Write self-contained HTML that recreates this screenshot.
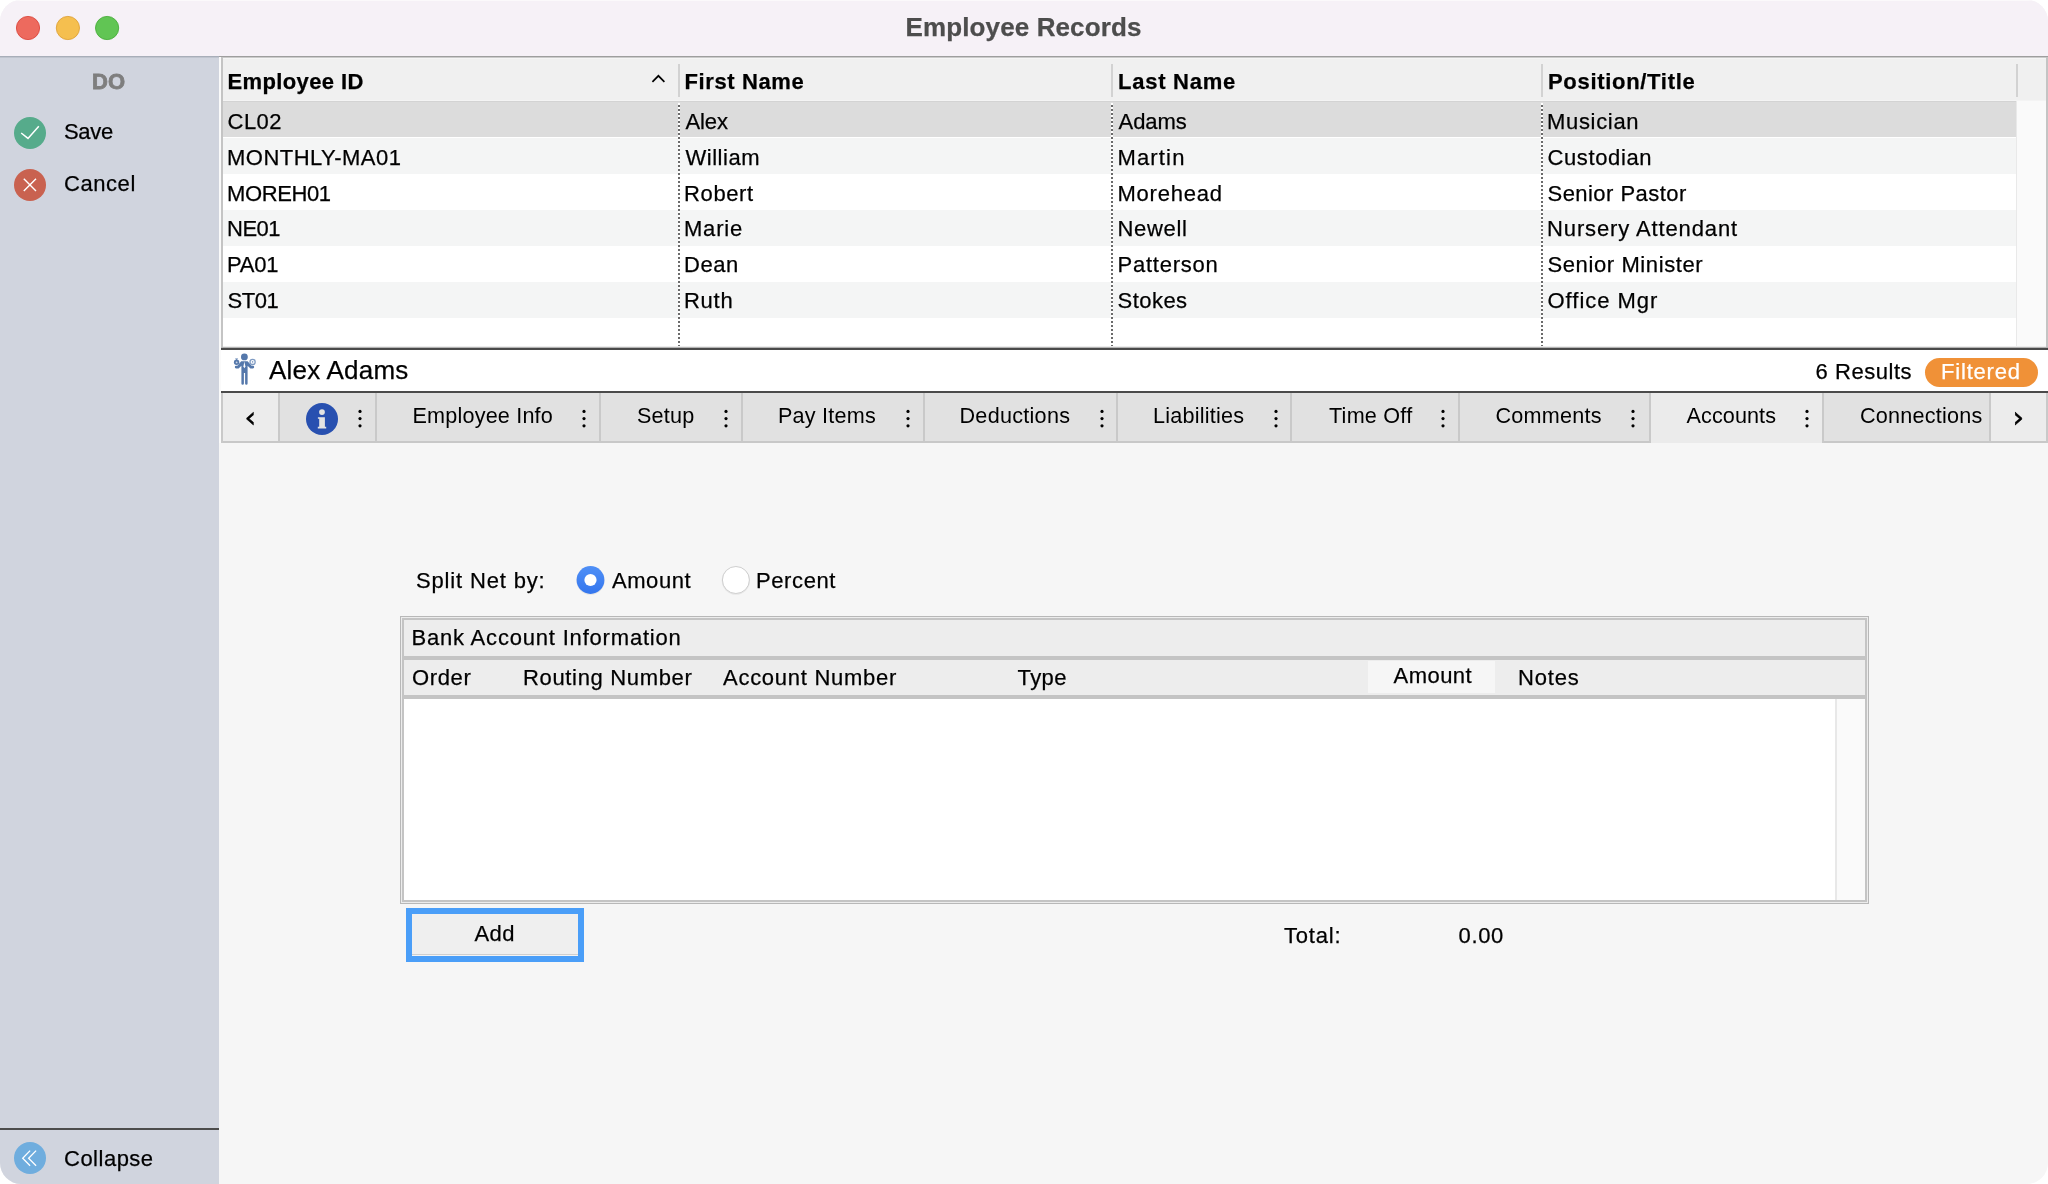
<!DOCTYPE html>
<html lang="en">
<head>
<meta charset="utf-8">
<title>Employee Records</title>
<style>
*{box-sizing:border-box;margin:0;padding:0}
html,body{width:2048px;height:1184px;overflow:hidden;background:#fff}
body{font-family:"Liberation Sans",sans-serif;color:#000;font-size:22px;position:relative}
.win{position:absolute;left:0;top:0;width:2048px;height:1184px;border-radius:21px;overflow:hidden;background:#f6f6f6}
.win div,.win span,.win svg{position:absolute}
.t{white-space:nowrap;line-height:30px;height:30px;-webkit-text-stroke:0.25px currentColor}
.tx{left:0;top:0;width:2048px;height:1184px;will-change:transform}
.b{display:block}
.tl{width:24px;height:24px;border-radius:50%;top:16px}
.alt{left:223px;width:1793px;height:36px;background:#f4f5f5}
.hsep{top:64px;width:2px;height:33px;background:#d2d2d2}
.vdot{top:103px;width:2px;height:245px;background:repeating-linear-gradient(to bottom,#fff 0,#fff 2px,#6a6a6a 2px,#6a6a6a 4px)}
.tsep{top:393px;width:2px;height:48px;background:#c9c9c9}
.dot{width:3.4px;height:3.4px;border-radius:50%;background:#000}
</style>
</head>
<body>
<div class="win">
<!-- title bar -->
<div style="left:0;top:0;width:2048px;height:56px;background:#f6f1f7"></div>
<div style="left:0;top:0;width:2048px;height:1px;background:#fbf9fb"></div>
<svg style="left:15px;top:15px" width="26" height="26" viewBox="0 0 26 26"><circle cx="13" cy="13" r="11.6" fill="#ed6a5e" stroke="#db4a3f" stroke-width="0.9"/></svg>
<svg style="left:55px;top:15px" width="26" height="26" viewBox="0 0 26 26"><circle cx="12.9" cy="13" r="11.6" fill="#f5bf4f" stroke="#dfa33a" stroke-width="0.9"/></svg>
<svg style="left:94px;top:15px" width="26" height="26" viewBox="0 0 26 26"><circle cx="13.1" cy="13" r="11.6" fill="#61c554" stroke="#49ae3c" stroke-width="0.9"/></svg>
<!-- sidebar -->
<div style="left:0;top:56px;width:219px;height:1128px;background:#d0d4de"></div>
<div style="left:0;top:56px;width:2048px;height:1px;background:#9e9e9e"></div>
<div style="left:0;top:56px;width:219px;height:1px;background:#a8aeb9"></div>
<div style="left:0;top:57px;width:219px;height:1px;background:#bfc4ce"></div>
<div style="left:0;top:1128px;width:219px;height:2px;background:#4c4c4c"></div>
<svg style="left:14px;top:117px" width="32" height="32" viewBox="0 0 32 32"><circle cx="16" cy="16" r="16" fill="#56ab8b"/><path d="M7.2 16 L14 21.4 L24.8 9.2" fill="none" stroke="#fff" stroke-width="1.5"/></svg>
<svg style="left:14px;top:169px" width="32" height="32" viewBox="0 0 32 32"><circle cx="16" cy="16" r="16" fill="#c96250"/><path d="M9.8 9.8 L22 22 M22 9.8 L9.8 22" fill="none" stroke="#fff" stroke-width="1.4"/></svg>
<svg style="left:14px;top:1142px" width="32" height="32" viewBox="0 0 32 32"><circle cx="16" cy="16" r="16" fill="#6fadde"/><path d="M16.1 8.6 L8.7 16.2 L16.1 23.8 M22.1 8.6 L14.6 16.2 L22.1 23.8" fill="none" stroke="#fff" stroke-width="1.3"/></svg>
<!-- gap strip between sidebar and content -->
<div style="left:219px;top:57px;width:2px;height:386px;background:#fafafa"></div>
<!-- table -->
<div style="left:221px;top:57px;width:1827px;height:291px;background:#fff"></div>
<div style="left:221px;top:57px;width:1827px;height:1px;background:#cbcbcb"></div>
<div style="left:221px;top:58px;width:1827px;height:43px;background:#f0f0f0"></div>
<div style="left:223px;top:58px;width:1823px;height:1px;background:#f5f5f5"></div>
<div style="left:221px;top:100px;width:1827px;height:1px;background:#f4f4f4"></div>
<div style="left:223px;top:101px;width:1793px;height:36px;background:#dcdcdc"></div>
<div style="left:223px;top:101px;width:1793px;height:1px;background:#d3d3d3"></div>
<div class="alt" style="top:138px"></div>
<div class="alt" style="top:210px"></div>
<div class="alt" style="top:282px"></div>
<div style="left:2016px;top:101px;width:30px;height:247px;background:#fafafa;border-left:1px solid #e9e9e9"></div>
<div style="left:221px;top:57px;width:2px;height:291px;background:#c4c4c4"></div>
<div style="left:2046px;top:57px;width:2px;height:291px;background:#c4c4c4"></div>
<div class="hsep" style="left:678px"></div>
<div class="hsep" style="left:1111px"></div>
<div class="hsep" style="left:1541px"></div>
<div class="hsep" style="left:2016px"></div>
<div class="vdot" style="left:678px"></div>
<div class="vdot" style="left:1111px"></div>
<div class="vdot" style="left:1541px"></div>
<svg style="left:650px;top:72px" width="17" height="13" viewBox="0 0 17 13"><path d="M2.4 9.8 L8.4 3.8 L14.4 9.8" fill="none" stroke="#000" stroke-width="1.7"/></svg>
<div style="left:223px;top:346px;width:1823px;height:1px;background:#ececec"></div>
<div style="left:221px;top:347px;width:1827px;height:1px;background:#b4b4b4"></div>
<div style="left:221px;top:348px;width:1827px;height:2px;background:#4a4a4a"></div>
<!-- name bar -->
<div style="left:221px;top:350px;width:1827px;height:41px;background:#fff"></div>
<div style="left:221px;top:391px;width:1827px;height:2px;background:#4a4a4a"></div>
<svg style="left:232px;top:352px" width="26" height="35" viewBox="0 0 26 35">
 <g fill="#5578ab">
  <circle cx="12.4" cy="4.9" r="3.4"/>
  <path d="M9.2 9.2 h6.4 l4 4.6 h1.3 a1.3 1.3 0 0 1 0 2.6 h-2.5 l-2.8 -2.6 v17.8 a1.25 1.25 0 0 1 -2.5 0 v-10.6 h-1.2 v10.6 a1.25 1.25 0 0 1 -2.5 0 v-17.8 l-2.8 2.6 h-2.5 a1.3 1.3 0 0 1 0 -2.6 h1.3 z"/>
  <circle cx="4.6" cy="10.2" r="2.7"/>
  <path d="M3 6.6 l1.6 1.4 l1.6 -1.4 z"/>
 </g>
 <circle cx="20.6" cy="9.9" r="2.6" fill="none" stroke="#7f9bc3" stroke-width="1.3"/>
 <circle cx="20.6" cy="9.9" r="0.8" fill="#7f9bc3"/>
 <path d="M12.4 9.6 l1 4.8 l-1 1.8 l-1 -1.8 z" fill="#fff"/>
 <circle cx="4.6" cy="10.4" r="0.9" fill="#c9d4e6"/>
</svg>
<div style="left:1925px;top:358px;width:113px;height:29px;border-radius:14.5px;background:#f09137"></div>
<!-- tab bar -->
<div style="left:221px;top:393px;width:1827px;height:48px;background:#e1e1e1"></div>
<div style="left:221px;top:441px;width:1827px;height:2px;background:#c8c8c8"></div>
<div style="left:223px;top:393px;width:56px;height:48px;background:#ececec"></div>
<div style="left:1651px;top:393px;width:172px;height:50px;background:#ebebeb"></div>
<div style="left:1991px;top:393px;width:55px;height:48px;background:#ececec"></div>
<div style="left:221px;top:393px;width:2px;height:50px;background:#c9c9c9"></div>
<div style="left:2046px;top:393px;width:2px;height:50px;background:#c9c9c9"></div>
<div class="tsep" style="left:278px"></div>
<div class="tsep" style="left:375px"></div>
<div class="tsep" style="left:599px"></div>
<div class="tsep" style="left:741px"></div>
<div class="tsep" style="left:923px"></div>
<div class="tsep" style="left:1116px"></div>
<div class="tsep" style="left:1290px"></div>
<div class="tsep" style="left:1458px"></div>
<div class="tsep" style="left:1649px"></div>
<div class="tsep" style="left:1822px;height:50px"></div>
<div class="tsep" style="left:1989px"></div>
<svg style="left:306px;top:403px" width="32" height="32" viewBox="0 0 32 32"><circle cx="16" cy="16" r="16" fill="#2850b0"/><circle cx="16" cy="9.1" r="2.9" fill="#e3e3e3"/><path d="M11.9 14.2 h7 v9.6 h1.3 v1.8 h-8.4 v-1.8 h1.4 v-8 h-1.3 z" fill="#e3e3e3"/></svg>
<svg style="left:353.8px;top:405px" width="12" height="26" viewBox="0 0 12 26"><circle cx="6" cy="6.4" r="1.6"/><circle cx="6" cy="13.6" r="1.6"/><circle cx="6" cy="20.8" r="1.6"/></svg>
<svg style="left:578px;top:405px" width="12" height="26" viewBox="0 0 12 26"><circle cx="6" cy="6.4" r="1.6"/><circle cx="6" cy="13.6" r="1.6"/><circle cx="6" cy="20.8" r="1.6"/></svg>
<svg style="left:719.6px;top:405px" width="12" height="26" viewBox="0 0 12 26"><circle cx="6" cy="6.4" r="1.6"/><circle cx="6" cy="13.6" r="1.6"/><circle cx="6" cy="20.8" r="1.6"/></svg>
<svg style="left:901.5px;top:405px" width="12" height="26" viewBox="0 0 12 26"><circle cx="6" cy="6.4" r="1.6"/><circle cx="6" cy="13.6" r="1.6"/><circle cx="6" cy="20.8" r="1.6"/></svg>
<svg style="left:1095.5px;top:405px" width="12" height="26" viewBox="0 0 12 26"><circle cx="6" cy="6.4" r="1.6"/><circle cx="6" cy="13.6" r="1.6"/><circle cx="6" cy="20.8" r="1.6"/></svg>
<svg style="left:1269.9px;top:405px" width="12" height="26" viewBox="0 0 12 26"><circle cx="6" cy="6.4" r="1.6"/><circle cx="6" cy="13.6" r="1.6"/><circle cx="6" cy="20.8" r="1.6"/></svg>
<svg style="left:1436.75px;top:405px" width="12" height="26" viewBox="0 0 12 26"><circle cx="6" cy="6.4" r="1.6"/><circle cx="6" cy="13.6" r="1.6"/><circle cx="6" cy="20.8" r="1.6"/></svg>
<svg style="left:1626.75px;top:405px" width="12" height="26" viewBox="0 0 12 26"><circle cx="6" cy="6.4" r="1.6"/><circle cx="6" cy="13.6" r="1.6"/><circle cx="6" cy="20.8" r="1.6"/></svg>
<svg style="left:1801.2px;top:405px" width="12" height="26" viewBox="0 0 12 26"><circle cx="6" cy="6.4" r="1.6"/><circle cx="6" cy="13.6" r="1.6"/><circle cx="6" cy="20.8" r="1.6"/></svg>
<!-- content -->
<svg style="left:574px;top:563px" width="34" height="36" viewBox="0 0 34 36">
 <defs><linearGradient id="rg" x1="0" y1="0" x2="0" y2="1"><stop offset="0" stop-color="#4f8ff6"/><stop offset="1" stop-color="#3476ee"/></linearGradient></defs>
 <circle cx="16.5" cy="17.6" r="14.2" fill="#000" opacity="0.07"/>
 <circle cx="16.5" cy="17" r="13.9" fill="url(#rg)"/>
 <circle cx="16.5" cy="17" r="6.1" fill="#fff"/>
</svg>
<svg style="left:719px;top:563px" width="34" height="36" viewBox="0 0 34 36">
 <circle cx="16.9" cy="17.6" r="14.2" fill="#000" opacity="0.06"/>
 <circle cx="16.9" cy="17" r="13.5" fill="#fff" stroke="#cfcfcf" stroke-width="1"/>
</svg>
<!-- bank box -->
<div style="left:400px;top:616px;width:1469px;height:288px;background:#ececec;border:1px solid #b8b8b8"></div>
<div style="left:402px;top:618px;width:1465px;height:284px;background:#fff;border:2px solid #c4c4c4"></div>
<div style="left:404px;top:620px;width:1461px;height:36px;background:#ededed"></div>
<div style="left:404px;top:656px;width:1461px;height:4px;background:#c4c4c4"></div>
<div style="left:404px;top:660px;width:1461px;height:35px;background:#ededed"></div>
<div style="left:404px;top:695px;width:1461px;height:4px;background:#c4c4c4"></div>
<div style="left:1368px;top:661px;width:127px;height:32px;background:#f6f6f6"></div>
<div style="left:1835px;top:699px;width:30px;height:201px;background:#fafafa;border-left:2px solid #e8e8e8"></div>
<!-- add button -->
<div style="left:406px;top:908px;width:178px;height:54px;background:#4a9ef8"></div>
<div style="left:412px;top:914px;width:166px;height:42px;background:#efefef"></div>
<div style="left:412px;top:954px;width:166px;height:1px;background:#cfcfcf"></div>
<div style="left:412px;top:955px;width:166px;height:1px;background:#f3f3f3"></div>
<div class="tx">
<span class="t" style="left:905.5px;top:12px;font-size:26px;font-weight:bold;color:#4d4d4d;letter-spacing:0.12px;">Employee Records</span>
<span class="t" style="left:92px;top:67px;font-size:22px;font-weight:bold;color:#7e7e7e;-webkit-text-stroke-width:0.8px;letter-spacing:0.08px;">DO</span>
<span class="t" style="left:64px;top:117px;font-size:22px;letter-spacing:-0.3px;">Save</span>
<span class="t" style="left:64px;top:169px;font-size:22px;letter-spacing:0.56px;">Cancel</span>
<span class="t" style="left:64px;top:1144px;font-size:22px;letter-spacing:0.5px;">Collapse</span>
<span class="t" style="left:227.5px;top:67px;font-size:22px;font-weight:bold;letter-spacing:0.38px;">Employee ID</span>
<span class="t" style="left:684.5px;top:67px;font-size:22px;font-weight:bold;letter-spacing:0.61px;">First Name</span>
<span class="t" style="left:1118px;top:67px;font-size:22px;font-weight:bold;letter-spacing:0.75px;">Last Name</span>
<span class="t" style="left:1548px;top:67px;font-size:22px;font-weight:bold;letter-spacing:0.69px;">Position/Title</span>
<span class="t" style="left:227.5px;top:107px;font-size:22px;letter-spacing:0.5px;">CL02</span>
<span class="t" style="left:685.5px;top:107px;font-size:22px;letter-spacing:-0.14px;">Alex</span>
<span class="t" style="left:1118.5px;top:107px;font-size:22px;letter-spacing:-0.03px;">Adams</span>
<span class="t" style="left:1547px;top:107px;font-size:22px;letter-spacing:0.68px;">Musician</span>
<span class="t" style="left:227px;top:143px;font-size:22px;letter-spacing:0.47px;">MONTHLY-MA01</span>
<span class="t" style="left:685.5px;top:143px;font-size:22px;letter-spacing:0.52px;">William</span>
<span class="t" style="left:1117.5px;top:143px;font-size:22px;letter-spacing:1.15px;">Martin</span>
<span class="t" style="left:1547.5px;top:143px;font-size:22px;letter-spacing:0.62px;">Custodian</span>
<span class="t" style="left:227px;top:179px;font-size:22px;letter-spacing:-0.39px;">MOREH01</span>
<span class="t" style="left:684px;top:179px;font-size:22px;letter-spacing:0.63px;">Robert</span>
<span class="t" style="left:1117.5px;top:179px;font-size:22px;letter-spacing:0.76px;">Morehead</span>
<span class="t" style="left:1547.5px;top:179px;font-size:22px;letter-spacing:0.46px;">Senior Pastor</span>
<span class="t" style="left:227px;top:214px;font-size:22px;letter-spacing:-0.5px;">NE01</span>
<span class="t" style="left:684px;top:214px;font-size:22px;letter-spacing:0.79px;">Marie</span>
<span class="t" style="left:1117.5px;top:214px;font-size:22px;letter-spacing:0.68px;">Newell</span>
<span class="t" style="left:1547px;top:214px;font-size:22px;letter-spacing:0.88px;">Nursery Attendant</span>
<span class="t" style="left:227px;top:250px;font-size:22px;letter-spacing:-0.26px;">PA01</span>
<span class="t" style="left:684px;top:250px;font-size:22px;letter-spacing:0.52px;">Dean</span>
<span class="t" style="left:1117.5px;top:250px;font-size:22px;letter-spacing:0.77px;">Patterson</span>
<span class="t" style="left:1547.5px;top:250px;font-size:22px;letter-spacing:0.6px;">Senior Minister</span>
<span class="t" style="left:227.5px;top:286px;font-size:22px;letter-spacing:-0.46px;">ST01</span>
<span class="t" style="left:684px;top:286px;font-size:22px;letter-spacing:0.72px;">Ruth</span>
<span class="t" style="left:1117.5px;top:286px;font-size:22px;letter-spacing:0.47px;">Stokes</span>
<span class="t" style="left:1547.5px;top:286px;font-size:22px;letter-spacing:0.98px;">Office Mgr</span>
<span class="t" style="left:269px;top:355px;font-size:26px;letter-spacing:0.22px;">Alex Adams</span>
<span class="t" style="left:1815.5px;top:357px;font-size:22px;letter-spacing:0.55px;">6 Results</span>
<span class="t" style="left:1941px;top:357px;font-size:22px;color:#fff;letter-spacing:0.81px;">Filtered</span>
<span class="t" style="left:412.5px;top:401px;font-size:21.6px;-webkit-text-stroke-width:0px;letter-spacing:0.19px;">Employee Info</span>
<span class="t" style="left:637px;top:401px;font-size:21.6px;-webkit-text-stroke-width:0px;letter-spacing:0.21px;">Setup</span>
<span class="t" style="left:778px;top:401px;font-size:21.6px;-webkit-text-stroke-width:0px;letter-spacing:0.22px;">Pay Items</span>
<span class="t" style="left:959.5px;top:401px;font-size:21.6px;-webkit-text-stroke-width:0px;letter-spacing:0.27px;">Deductions</span>
<span class="t" style="left:1153px;top:401px;font-size:21.6px;-webkit-text-stroke-width:0px;letter-spacing:0.23px;">Liabilities</span>
<span class="t" style="left:1329px;top:401px;font-size:21.6px;-webkit-text-stroke-width:0px;letter-spacing:0.22px;">Time Off</span>
<span class="t" style="left:1495.5px;top:401px;font-size:21.6px;-webkit-text-stroke-width:0px;letter-spacing:0.24px;">Comments</span>
<span class="t" style="left:1686.5px;top:401px;font-size:21.6px;-webkit-text-stroke-width:0px;letter-spacing:0.1px;">Accounts</span>
<span class="t" style="left:1860px;top:401px;font-size:21.6px;-webkit-text-stroke-width:0px;letter-spacing:0.22px;">Connections</span>
<span class="t" style="left:416px;top:566px;font-size:22px;letter-spacing:0.84px;">Split Net by:</span>
<span class="t" style="left:612px;top:566px;font-size:22px;letter-spacing:0.55px;">Amount</span>
<span class="t" style="left:756px;top:566px;font-size:22px;letter-spacing:0.6px;">Percent</span>
<span class="t" style="left:411.5px;top:623px;font-size:22px;letter-spacing:0.81px;">Bank Account Information</span>
<span class="t" style="left:412px;top:663px;font-size:22px;letter-spacing:0.63px;">Order</span>
<span class="t" style="left:523px;top:663px;font-size:22px;letter-spacing:0.66px;">Routing Number</span>
<span class="t" style="left:723px;top:663px;font-size:22px;letter-spacing:0.73px;">Account Number</span>
<span class="t" style="left:1017.5px;top:663px;font-size:22px;letter-spacing:0.45px;">Type</span>
<span class="t" style="left:1393.5px;top:661px;font-size:22px;letter-spacing:0.47px;">Amount</span>
<span class="t" style="left:1518px;top:663px;font-size:22px;letter-spacing:0.82px;">Notes</span>
<span class="t" style="left:474.5px;top:919px;font-size:22px;letter-spacing:0.44px;">Add</span>
<span class="t" style="left:1284px;top:921px;font-size:22px;letter-spacing:0.8px;">Total:</span>
<span class="t" style="left:1458.5px;top:921px;font-size:22px;letter-spacing:0.66px;">0.00</span>
<span class="t" style="left:244.5px;top:402px;font-size:29px;font-family:'DejaVu Sans',sans-serif;-webkit-text-stroke-width:0.5px">‹</span>
<span class="t" style="left:2012.5px;top:402px;font-size:29px;font-family:'DejaVu Sans',sans-serif;-webkit-text-stroke-width:0.5px">›</span>
</div>
</div>
</body>
</html>
